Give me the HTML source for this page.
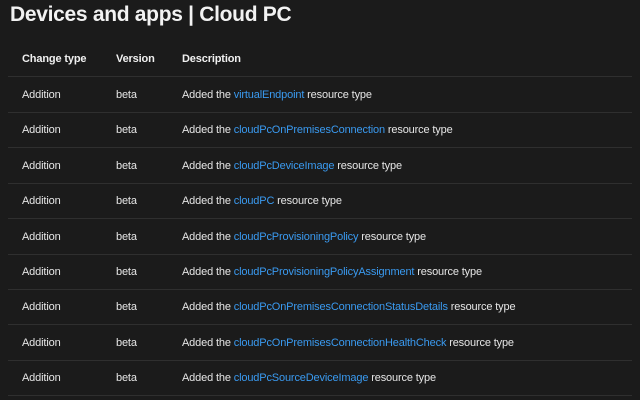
<!DOCTYPE html>
<html><head><meta charset="utf-8"><style>
body{margin:0;background:#1b1b1b;width:640px;height:400px;overflow:hidden;font-family:"Liberation Sans",sans-serif;color:#e6e6e6}
h1{position:absolute;left:10px;top:3px;margin:0;font-size:21px;font-weight:bold;color:#f2f2f2;letter-spacing:-0.3px}
.r{position:absolute;left:8px;width:624px;height:35px;border-bottom:1px solid #2f2f2f;font-size:11px;letter-spacing:-0.15px}
.r span{position:absolute;top:12px}
.a{left:14px}.b{left:108px}.c{left:174px}
.h{font-weight:bold;color:#f0f0f0}
a{color:#3a9af0;text-decoration:none}
</style></head><body>
<h1>Devices and apps | Cloud PC</h1>
<div class="r h" style="top:41px"><span class="a">Change type</span><span class="b">Version</span><span class="c">Description</span></div>
<div class="r" style="top:77px"><span class="a">Addition</span><span class="b">beta</span><span class="c">Added the <a>virtualEndpoint</a> resource type</span></div>
<div class="r" style="top:112px"><span class="a">Addition</span><span class="b">beta</span><span class="c">Added the <a>cloudPcOnPremisesConnection</a> resource type</span></div>
<div class="r" style="top:148px"><span class="a">Addition</span><span class="b">beta</span><span class="c">Added the <a>cloudPcDeviceImage</a> resource type</span></div>
<div class="r" style="top:183px"><span class="a">Addition</span><span class="b">beta</span><span class="c">Added the <a>cloudPC</a> resource type</span></div>
<div class="r" style="top:219px"><span class="a">Addition</span><span class="b">beta</span><span class="c">Added the <a>cloudPcProvisioningPolicy</a> resource type</span></div>
<div class="r" style="top:254px"><span class="a">Addition</span><span class="b">beta</span><span class="c">Added the <a>cloudPcProvisioningPolicyAssignment</a> resource type</span></div>
<div class="r" style="top:289px"><span class="a">Addition</span><span class="b">beta</span><span class="c">Added the <a>cloudPcOnPremisesConnectionStatusDetails</a> resource type</span></div>
<div class="r" style="top:325px"><span class="a">Addition</span><span class="b">beta</span><span class="c">Added the <a>cloudPcOnPremisesConnectionHealthCheck</a> resource type</span></div>
<div class="r" style="top:360px"><span class="a">Addition</span><span class="b">beta</span><span class="c">Added the <a>cloudPcSourceDeviceImage</a> resource type</span></div>
</body></html>
